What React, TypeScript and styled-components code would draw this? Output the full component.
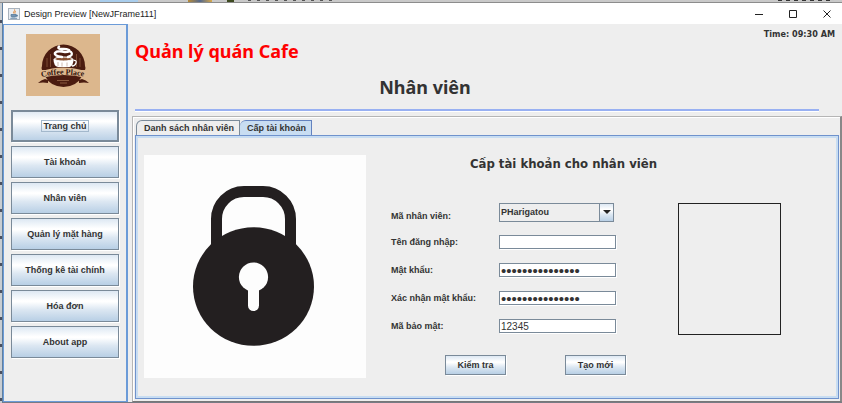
import React, { useState } from "react";
import styled, { createGlobalStyle, css } from "styled-components";

const Global = createGlobalStyle`
  *, *::before, *::after { box-sizing: border-box; }
  body { margin: 0; background: #c9c9c9; }
  button, input, select { font: inherit; color: inherit; margin: 0; }
  h1, h2, h3 { margin: 0; }
`;

const uiFont = `"Liberation Sans", Arial, sans-serif`;
const headingFont = `"Noto Sans", "Open Sans", sans-serif`;
const condensedFont = `"DejaVu Sans Condensed", "Noto Sans", sans-serif`;
const steel = "#7a8a99";

const metal = css`
  background: linear-gradient(#dde8f3 0%, #ffffff 32%, #ffffff 36%, #dce7f2 62%, #b8cfe5 100%);
`;

const Desktop = styled.div`
  min-height: 100vh;
  display: flex;
  padding: 3px 0 0 2px;
  background:
    linear-gradient(#8c8c8c, #8c8c8c) 0 2px / 100% 1px no-repeat,
    linear-gradient(#a9cdec, #a9cdec) 100px 0 / 38px 2px no-repeat,
    linear-gradient(90deg, #b98b35, #53688d, #d7a84a) 188px 0 / 24px 2px no-repeat,
    linear-gradient(#3d4a20, #3d4a20) 227px 0 / 7px 2px no-repeat,
    repeating-linear-gradient(90deg, #555 0 3px, #c6c6c6 3px 9px) 248px 0 / 84px 1px no-repeat,
    repeating-linear-gradient(90deg, #333 0 4px, #c6c6c6 4px 8px) 778px 0 / 56px 1px no-repeat,
    repeating-linear-gradient(#c8cdd2 0 17px, #4b5060 17px 20px, #c8cdd2 20px 27px) 0 3px / 2px 100% no-repeat,
    #c9c9c9;
`;

const Frame = styled.div`
  flex: 1;
  min-width: 0;
  display: flex;
  flex-direction: column;
  background: #eeeeee;
  color: #333333;
  border-left: 1px solid #5f7f9f;
  border-bottom: 1px solid #777b84;
  font: bold 9px/12px ${uiFont};
`;

const TitleBar = styled.header`
  display: flex;
  align-items: center;
  gap: 4px;
  height: 21px;
  padding: 0 5px;
  background: #ffffff;
  color: #222222;
  font: 9px/14px ${uiFont};
`;

const WindowButtons = styled.div`
  display: flex;
  margin-left: auto;
  gap: 14px;
`;

const WindowButton = styled.button`
  display: grid;
  place-items: center;
  width: 20px;
  height: 18px;
  padding: 0;
  border: 0;
  background: none;
`;

const Body = styled.div`
  flex: 1;
  display: flex;
  gap: 4px;
`;

const Sidebar = styled.nav`
  flex: none;
  display: flex;
  flex-direction: column;
  gap: 4px;
  width: 125px;
  padding: 9px 7px;
  border: 1px solid #6b9bd8;
  border-right-width: 2px;
`;

const LogoBox = styled.div`
  height: 62px;
  margin: 0 0 10px 15px;
  svg { display: block; }
`;

const MetalButton = styled.button<{ $active?: boolean }>`
  ${metal}
  border: 1px solid ${steel};
  padding: 0 11px;
  height: 20px;
  box-shadow: 1px 1px 0 #ffffff;
  ${p => p.$active && css`box-shadow: inset 0 0 0 1px ${steel}, 1px 1px 0 #ffffff;`}
`;

const NavButton = styled(MetalButton)`
  height: 32px;
  padding: 0;
  span {
    padding: 0 1px;
    outline: ${p => (p.$active ? "1px solid #a3b8cc" : "none")};
  }
`;

const Main = styled.main`
  flex: 1;
  min-width: 0;
  display: flex;
  flex-direction: column;
`;

const Banner = styled.div`
  display: flex;
  justify-content: space-between;
  align-items: flex-start;
  height: 46px;
  padding: 4px 7px 0 3px;
`;

const AppName = styled.h1`
  padding-top: 10px;
  color: #ff0000;
  font: bold 18px/26px ${headingFont};
`;

const Clock = styled.time`
  font: bold 9px/13px ${condensedFont};
`;

const PageName = styled.h2`
  text-align: center;
  padding-right: 124px;
  font: bold 18px/34px ${headingFont};
`;

const Rule = styled.hr`
  margin: 5px 23px 5px 3px;
  height: 2px;
  border: 0;
  background: #98b0f2;
  box-shadow: 0 1px 0 #ffffff;
`;

const TabPane = styled.section`
  flex: 1;
  display: flex;
  flex-direction: column;
  padding: 3px 1px 2px 2px;
  border: 1px solid #b5b5b5;
  border-right: 2px solid #888888;
  border-bottom-color: #777777;
  box-shadow: inset 1px 1px 0 #ffffff;
`;

const TabList = styled.div`
  display: flex;
  padding-left: 1px;
`;

const Tab = styled.button<{ $selected: boolean }>`
  height: 15px;
  padding: 0 5px 0 7px;
  border: 1px solid ${p => (p.$selected ? "#6382bf" : steel)};
  border-bottom: 0;
  border-top-left-radius: 6px 6px;
  background: ${p => (p.$selected ? "#c8ddf2" : "#eeeeee")};
  line-height: 13px;
  & + & { border-left: 0; }
`;

const TabPanel = styled.div`
  flex: 1;
  display: flex;
  align-items: flex-start;
  padding: 19px 24px 18px 8px;
  border: 1px solid #6f92cc;
  box-shadow: inset 0 0 0 2px #c8ddf2;
`;

const Picture = styled.div`
  flex: none;
  background: #fdfdfd;
  svg { display: block; }
`;

const Account = styled.form`
  flex: 1;
  display: grid;
  grid-template-columns: 244px 1fr;
  column-gap: 18px;
  padding-left: 25px;
`;

const FormTitle = styled.h3`
  grid-column: 1 / -1;
  padding: 0 78px 0 0;
  margin-bottom: 30px;
  text-align: center;
  font: bold 13px/18px ${condensedFont};
`;

const Fields = styled.div`
  display: grid;
  grid-template-columns: 108px 117px;
  grid-template-rows: 18px 14px 14px 14px 14px;
  row-gap: 14px;
  align-items: center;
`;

const Label = styled.label<{ $low?: boolean }>`
  padding-top: ${p => (p.$low ? "8px" : "0")};
`;

const Field = styled.input<{ $secret?: boolean }>`
  width: 117px;
  height: 14px;
  padding: 0 1px;
  border: 1px solid ${steel};
  background: #ffffff;
  box-shadow: 1px 1px 0 #ffffff;
  font: ${p => (p.$secret ? "15px/12px" : "10px/12px")} ${uiFont};
`;

const Combo = styled.div`
  position: relative;
  width: 115px;
  height: 19px;
`;

const Select = styled.select`
  appearance: none;
  width: 100%;
  height: 100%;
  padding: 0 17px 0 1px;
  border: 1px solid ${steel};
  border-radius: 0;
  background: #eeeeee;
`;

const ComboArrow = styled.span`
  ${metal}
  position: absolute;
  inset: 1px 1px 1px auto;
  display: grid;
  place-items: center;
  width: 14px;
  border-left: 1px solid ${steel};
  pointer-events: none;
`;

const PhotoFrame = styled.div`
  width: 103px;
  height: 132px;
  margin-left: 25px;
  border: 1px solid #222222;
`;

const Actions = styled.div`
  grid-column: 1 / -1;
  display: flex;
  gap: 59px;
  padding: 20px 0 0 54px;
  button { width: 61px; padding: 0; }
`;

const JavaIcon = () => (
  <svg width="12" height="12" viewBox="0 0 12 12" aria-hidden="true">
    <rect x=".5" y=".5" width="11" height="11" fill="#e9eef3" stroke="#a9b3bd" />
    <path d="M6.5 1.5C7.5 3 4.7 3.6 6 5.6M7.8 3.2C6.6 4 7 4.6 7.2 5.4" fill="none" stroke="#e2832e" strokeWidth="1" />
    <path d="M3 6.5h5v1.2q0 1.3-1 1.3H4q-1 0-1-1.3zM8 7h1.3v1.2H8M2.3 10.3h6.8" fill="#7895b2" stroke="#54789b" strokeWidth=".8" />
  </svg>
);

const Logo = () => (
  <svg width="74" height="62" viewBox="0 0 74 62" role="img" aria-label="Coffee Place">
    <rect width="74" height="62" fill="#dcb78d" />
    <path d="M16 36q-1-2 0-4a21.500 21.500 0 0 1 43 0q1 2 0 4z" fill="#4b1c10" />
    <path d="M21 33V24M24.500 33V20M50.500 33V20M54 33V24" stroke="#7c4a32" />
    <path d="M19 42q18-7 37 0q-5 10.500-18.500 11Q24 52.500 19 42z" fill="#4b1c10" />
    <path d="M12 49q3-3 7-4l3 1v3q-5-1-10 0zM63 49q-3-3-7-4l-3 1v3q5-1 10 0z" fill="#4b1c10" />
    <path d="M15 37.500q22-8 45 0v6.500q-22-6-45 0z" fill="#dcb78d" />
    <path d="M27.500 25q10-4 20 0q0 7-4 8H32q-4.500-1-4.500-8z" fill="#fff" />
    <ellipse cx="37.500" cy="25" rx="9" ry="2" fill="#8a5232" stroke="#fff" />
    <path d="M47.500 26.500q3.500-.5 2.500 2.500t-4 3" fill="none" stroke="#fff" strokeWidth="1.300" />
    <path d="M32 32v-4M36 32.500v-4M41 32.500v-4" stroke="#b79c8c" strokeWidth=".7" />
    <path d="M36 23q-8-1-7-4 2-3 10-1 6 0 4-2-3-1.500-7-1-5 0-3-2.500M42 23q6-2 3-5" fill="none" stroke="#fff" strokeWidth="2.400" strokeLinecap="round" />
    <path id="logo-arc" d="M15.500 43Q37.500 38 60 43" fill="none" />
    <text fill="#32140d" fontFamily="Liberation Serif, serif" fontWeight="bold" fontSize="8">
      <textPath href="#logo-arc">Coffee Place</textPath>
    </text>
    <path d="M31 46.500h12M34 49h7" stroke="#9b6b4c" strokeWidth=".8" />
  </svg>
);

const Padlock = () => (
  <svg width="222" height="223" viewBox="0 0 222 223" role="img" aria-label="Padlock">
    <path d="M72.500 100V64a27.500 27.500 0 0 1 27.500-27.500h19a27.500 27.500 0 0 1 27.500 27.500v36" fill="none" stroke="#231f20" strokeWidth="11" />
    <ellipse cx="109.500" cy="131.500" rx="60.500" ry="59.300" fill="#231f20" />
    <path d="M67 88h85v20H67z" fill="#231f20" />
    <circle cx="109.500" cy="122" r="14.600" fill="#fdfdfd" />
    <path d="M109.500 128v22.500" stroke="#fdfdfd" strokeWidth="11" strokeLinecap="round" />
  </svg>
);

const navItems = ["Trang chủ", "Tài khoản", "Nhân viên", "Quản lý mặt hàng", "Thống kê tài chính", "Hóa đơn", "About app"];
const tabs = ["Danh sách nhân viên", "Cấp tài khoản"];

const fields = [
  { id: "login", label: "Tên đăng nhập:", type: "text", value: "" },
  { id: "password", label: "Mật khẩu:", type: "password", value: "matkhaunhanvien" },
  { id: "confirm", label: "Xác nhận mật khẩu:", type: "password", value: "matkhaunhanvien" },
  { id: "code", label: "Mã bảo mật:", type: "text", value: "12345" },
];

export default function App() {
  const [active, setActive] = useState(0);
  const [tab, setTab] = useState(1);
  return (
    <>
      <Global />
      <Desktop>
        <Frame>
          <TitleBar>
            <JavaIcon />
            <span>Design Preview [NewJFrame111]</span>
            <WindowButtons>
              <WindowButton aria-label="Minimize">
                <svg width="8" height="8"><path d="M0 4.500h8" stroke="#222" /></svg>
              </WindowButton>
              <WindowButton aria-label="Maximize">
                <svg width="8" height="8"><path d="M.5.5h7v7h-7z" fill="none" stroke="#222" /></svg>
              </WindowButton>
              <WindowButton aria-label="Close">
                <svg width="8" height="8"><path d="M.5.5l7 7M7.500.5l-7 7" stroke="#222" /></svg>
              </WindowButton>
            </WindowButtons>
          </TitleBar>
          <Body>
            <Sidebar>
              <LogoBox><Logo /></LogoBox>
              {navItems.map((item, i) => (
                <NavButton key={item} type="button" $active={i === active} onClick={() => setActive(i)}>
                  <span>{item}</span>
                </NavButton>
              ))}
            </Sidebar>
            <Main>
              <Banner>
                <AppName>Quản lý quán Cafe</AppName>
                <Clock>Time: 09:30 AM</Clock>
              </Banner>
              <PageName>Nhân viên</PageName>
              <Rule />
              <TabPane>
                <TabList role="tablist">
                  {tabs.map((name, i) => (
                    <Tab key={name} type="button" role="tab" aria-selected={i === tab} $selected={i === tab} onClick={() => setTab(i)}>
                      {name}
                    </Tab>
                  ))}
                </TabList>
                <TabPanel role="tabpanel">
                  <Picture><Padlock /></Picture>
                  <Account onSubmit={e => e.preventDefault()}>
                    <FormTitle>Cấp tài khoản cho nhân viên</FormTitle>
                    <Fields>
                      <Label htmlFor="staff" $low>Mã nhân viên:</Label>
                      <Combo>
                        <Select id="staff" defaultValue="PHarigatou">
                          <option>PHarigatou</option>
                        </Select>
                        <ComboArrow>
                          <svg width="8" height="4" aria-hidden="true"><path d="M0 0h8L4 4z" fill="#222" /></svg>
                        </ComboArrow>
                      </Combo>
                      {fields.map(f => (
                        <React.Fragment key={f.id}>
                          <Label htmlFor={f.id}>{f.label}</Label>
                          <Field id={f.id} type={f.type} defaultValue={f.value} $secret={f.type === "password"} />
                        </React.Fragment>
                      ))}
                    </Fields>
                    <PhotoFrame />
                    <Actions>
                      <MetalButton type="submit">Kiểm tra</MetalButton>
                      <MetalButton type="button">Tạo mới</MetalButton>
                    </Actions>
                  </Account>
                </TabPanel>
              </TabPane>
            </Main>
          </Body>
        </Frame>
      </Desktop>
    </>
  );
}
